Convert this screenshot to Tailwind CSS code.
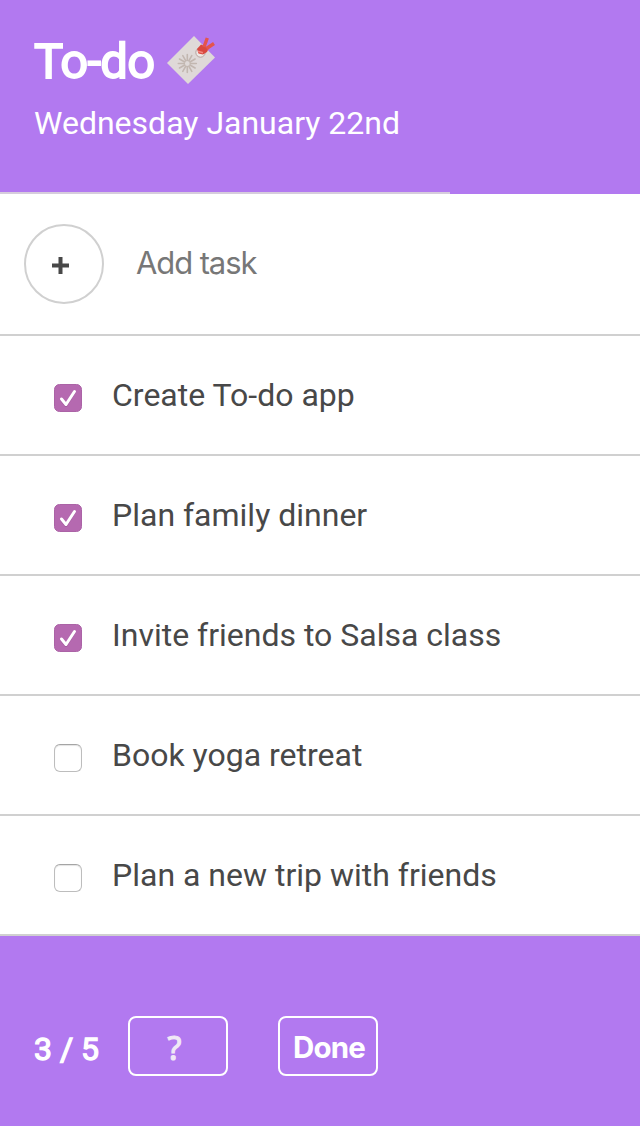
<!DOCTYPE html>
<html lang="en">
<head>
<meta charset="utf-8">
<title>To-do</title>
<script src="https://cdn.jsdelivr.net/npm/@tailwindcss/browser@4"></script>
</head>
<body class="flex h-[1126px] w-[640px] flex-col overflow-hidden bg-[#b279f0] font-['Roboto',sans-serif] text-[#484848]">
<header class="flex h-[192px] shrink-0 flex-col px-[34px] pt-[31px] text-white">
  <div class="flex h-[60px] items-center">
    <h1 class="mt-[2px] w-[132px] whitespace-nowrap text-[49px] leading-[60px] font-normal tracking-[-0.7px] [-webkit-text-stroke:1.8px_white]">To-do</h1>
    <svg class="mt-[-2px] size-[50px]" viewBox="0 0 50 50" fill="none">
      <path d="M1 28 28 1 49 22.5 22 49Z" fill="#dfd9d8"/>
      <g stroke="#c2b7b0" stroke-width="1.6" stroke-linecap="round" transform="translate(21.3 28.5)">
        <path d="M0-3V-9M0 3V9M-3 0H-9M3 0H9M1.5-2.6 4.5-7.8M2.6-1.5 7.8-4.5M2.6 1.5 7.8 4.5M1.5 2.6 4.5 7.8M-1.5 2.6-4.5 7.8M-2.6 1.5-7.8 4.5M-2.6-1.5-7.8-4.5M-1.5-2.6-4.5-7.8"/>
      </g>
      <circle cx="34.5" cy="17.5" r="4.7" fill="#eee8e5" stroke="#aa9490" stroke-width=".8"/>
      <path d="M31 14 35 9.5 43 13 41 17 37 19.5 32.5 18.5Z" fill="#d9483f"/>
      <path d="M38 12 41.3 3M40.5 13.5 48 8.5" stroke="#e4544d" stroke-width="3.4"/>
      <path d="M32 16.3 37 17.8" stroke="#f18880" stroke-width="1.5"/>
    </svg>
  </div>
  <p class="mt-[12px] whitespace-nowrap text-[32px] leading-[40px]">Wednesday January 22nd</p>
</header>
<div class="h-[2px] w-[450px] shrink-0 bg-[#d6cddc]"></div>
<main class="shrink-0 bg-white">
  <div class="flex h-[142px] items-start border-b-2 border-[#d0d0d0] pt-[30px] pl-6">
    <button class="flex size-20 items-center justify-center rounded-full border-2 border-[#d0d0d0] pt-[2px] pr-[7px]">
      <svg class="size-[17px]" viewBox="0 0 17 17"><path d="M8.5 0V17M0 8.5H17" stroke="#484848" stroke-width="4"/></svg>
    </button>
    <span class="mt-[19px] ml-8 whitespace-nowrap font-['Inter',sans-serif] text-[31px] leading-10 tracking-[-1.1px] text-[#777]">Add task</span>
  </div>
  <ul>
    <li class="flex h-[120px] items-start border-b-2 border-[#d0d0d0] pt-[39px] pl-[54px]">
      <svg class="mt-[9px] size-7" viewBox="0 0 28 28" fill="none"><rect x=".5" y=".5" width="27" height="27" rx="5" fill="#b569b0" stroke="#ab63a6"/><path d="M7.5 16 12 21.5 20.5 8" stroke="#8c4488" stroke-opacity=".4" stroke-width="3" stroke-linecap="round" stroke-linejoin="round"/><path d="M7.5 15 12 20.5 20.5 7.5" stroke="#fff" stroke-width="3" stroke-linecap="round" stroke-linejoin="round"/></svg>
      <span class="ml-[30px] whitespace-nowrap text-[32px] leading-10">Create To-do app</span>
    </li>
    <li class="flex h-[120px] items-start border-b-2 border-[#d0d0d0] pt-[39px] pl-[54px]">
      <svg class="mt-[9px] size-7" viewBox="0 0 28 28" fill="none"><rect x=".5" y=".5" width="27" height="27" rx="5" fill="#b569b0" stroke="#ab63a6"/><path d="M7.5 16 12 21.5 20.5 8" stroke="#8c4488" stroke-opacity=".4" stroke-width="3" stroke-linecap="round" stroke-linejoin="round"/><path d="M7.5 15 12 20.5 20.5 7.5" stroke="#fff" stroke-width="3" stroke-linecap="round" stroke-linejoin="round"/></svg>
      <span class="ml-[30px] whitespace-nowrap text-[32px] leading-10">Plan family dinner</span>
    </li>
    <li class="flex h-[120px] items-start border-b-2 border-[#d0d0d0] pt-[39px] pl-[54px]">
      <svg class="mt-[9px] size-7" viewBox="0 0 28 28" fill="none"><rect x=".5" y=".5" width="27" height="27" rx="5" fill="#b569b0" stroke="#ab63a6"/><path d="M7.5 16 12 21.5 20.5 8" stroke="#8c4488" stroke-opacity=".4" stroke-width="3" stroke-linecap="round" stroke-linejoin="round"/><path d="M7.5 15 12 20.5 20.5 7.5" stroke="#fff" stroke-width="3" stroke-linecap="round" stroke-linejoin="round"/></svg>
      <span class="ml-[30px] whitespace-nowrap text-[32px] leading-10">Invite friends to Salsa class</span>
    </li>
    <li class="flex h-[120px] items-start border-b-2 border-[#d0d0d0] pt-[39px] pl-[54px]">
      <span class="mt-[9px] size-7 rounded-[6px] border border-[#bdbdbd] border-t-[#a5a5a5] bg-white shadow-[inset_0_1px_1px_#e4e4e4]"></span>
      <span class="ml-[30px] whitespace-nowrap text-[32px] leading-10">Book yoga retreat</span>
    </li>
    <li class="flex h-[120px] items-start border-b-2 border-[#d0d0d0] pt-[39px] pl-[54px]">
      <span class="mt-[9px] size-7 rounded-[6px] border border-[#bdbdbd] border-t-[#a5a5a5] bg-white shadow-[inset_0_1px_1px_#e4e4e4]"></span>
      <span class="ml-[30px] whitespace-nowrap text-[32px] leading-10">Plan a new trip with friends</span>
    </li>
  </ul>
</main>
<footer class="flex items-start pt-20 pl-[34px] text-white">
  <span class="mt-[13px] w-[94px] whitespace-nowrap text-[32px] leading-10 font-normal [-webkit-text-stroke:1.3px_white]">3 / 5</span>
  <button class="flex h-[60px] w-[100px] items-center justify-center rounded-[8px] border-2 border-white pt-[4px] pr-[7px] font-['Noto_Sans',sans-serif] text-[32px] text-[#f0e8f6] [-webkit-text-stroke:1.2px_#f0e8f6]">?</button>
  <button class="ml-[50px] flex h-[60px] w-[100px] items-center justify-center rounded-[8px] border-2 border-white pt-[2px] pl-[2px] font-['Inter',sans-serif] text-[29.5px] font-bold tracking-[-0.8px]">Done</button>
</footer>
</body>
</html>
